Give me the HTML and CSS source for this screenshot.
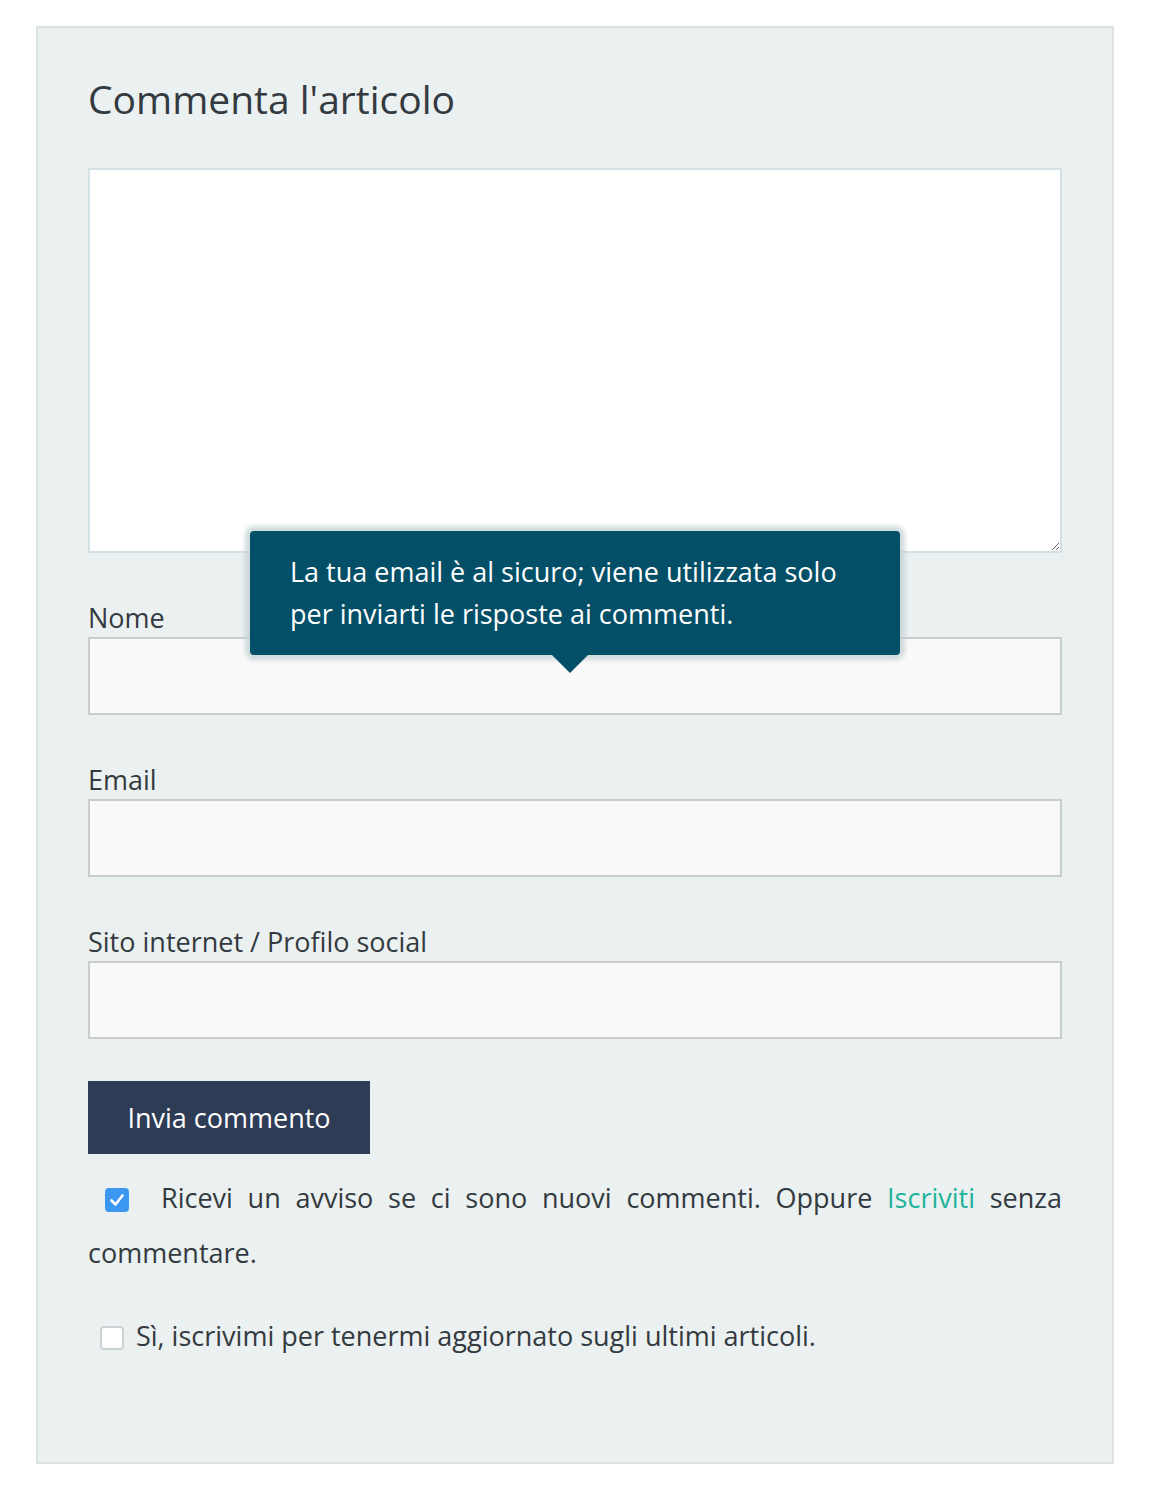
FILE: index.html
```html
<!DOCTYPE html>
<html lang="it">

<head>
    <meta charset="UTF-8">
    <meta name="viewport" content="width=device-width, initial-scale=1.0">
    <link rel="stylesheet" href="styles.css">
</head>

<body>
    <div class="comment-box">
        <h3 class="comment-title">Commenta l'articolo</h3>

        <form class="comment-form">
            <textarea class="comment-text"></textarea>

            <div class="field field-name">
                <label for="author">Nome</label>
                <input id="author" type="text">

                <!-- tooltip shown over the name field -->
                <div class="tooltip">
                    La tua email è al sicuro; viene utilizzata solo per inviarti le risposte ai commenti.
                </div>
            </div>

            <div class="field">
                <label for="email">Email</label>
                <input id="email" type="text">
            </div>

            <div class="field">
                <label for="url">Sito internet / Profilo social</label>
                <input id="url" type="text">
            </div>

            <button type="button" class="submit">Invia commento</button>

            <p class="subscribe">
                <span class="check checked"><svg viewBox="0 0 24 24" width="24" height="24">
                        <rect x="0" y="0" width="24" height="24" rx="4" fill="#3b97f1" />
                        <path d="M6.5 12.5 L10.5 16.5 L17.5 7.5" fill="none" stroke="#fff" stroke-width="2.6" stroke-linecap="round" stroke-linejoin="round" />
                    </svg></span>Ricevi un avviso se ci sono nuovi commenti. Oppure <a href="#">Iscriviti</a> senza commentare.
            </p>

            <p class="newsletter">
                <span class="check"></span>Sì, iscrivimi per tenermi aggiornato sugli ultimi articoli.
            </p>
        </form>
    </div>
</body>

</html>
```

FILE: styles.css
```css
body {
    margin: 0;
    background: #fff;
    font-family: "Open Sans", "Noto Sans", sans-serif;
    color: #333a40;
}

.comment-box {
    width: 974px;
    margin: 26px 0 0 36px;
    padding: 36px 50px 106px 50px;
    background: #ebf0f0;
    border: 2px solid #dde2e3;
}

.comment-title {
    margin: 0 0 34px 0;
    font-size: 39px;
    font-weight: 400;
    line-height: 70px;
    color: #333a40;
}

.comment-form {
    display: flex;
    flex-direction: column;
}

.comment-text {
    display: block;
    box-sizing: border-box;
    width: 974px;
    height: 385px;
    margin: 0;
    border: 2px solid #d3e1e5;
    background: #fff;
}

.field {
    position: relative;
    margin-top: 46px;
    display: flex;
    flex-direction: column;
}

.field label {
    font-size: 27px;
    line-height: 38px;
}

.field input {
    box-sizing: border-box;
    width: 974px;
    height: 78px;
    margin: 0;
    border: 2px solid #c9cdce;
    background: #f9f9f9;
}

.tooltip {
    position: absolute;
    left: 162px;
    top: -68px;
    width: 650px;
    box-sizing: border-box;
    padding: 20px 40px 20px 40px;
    background: #034f67;
    color: #fff;
    font-size: 27px;
    line-height: 42px;
    border-radius: 4px;
    box-shadow: 0 0 4px 5px rgba(190, 205, 210, 0.7);
}

.tooltip::after {
    content: "";
    position: absolute;
    left: 302px;
    bottom: -18px;
    border-left: 18px solid transparent;
    border-right: 18px solid transparent;
    border-top: 18px solid #034f67;
}

.submit {
    align-self: flex-start;
    margin-top: 42px;
    width: 282px;
    height: 73px;
    border: none;
    background: #2e3c55;
    color: #fff;
    font-family: inherit;
    font-size: 27px;
}

.subscribe {
    margin: 16px 0 0 0;
    font-size: 27px;
    line-height: 55px;
    text-align: justify;
}

.subscribe a {
    color: #1fb39b;
    text-decoration: none;
}

.check {
    display: inline-block;
    width: 24px;
    height: 24px;
    margin: 0 32px 0 17px;
    vertical-align: -4px;
}

.check svg {
    display: block;
}

.newsletter {
    margin: 36px 0 0 0;
    font-size: 27px;
    line-height: 40px;
}

.newsletter .check {
    box-sizing: border-box;
    margin: 0 12px 0 12px;
    border: 2px solid #cdd3d5;
    border-radius: 4px;
    background: #fff;
}
```
